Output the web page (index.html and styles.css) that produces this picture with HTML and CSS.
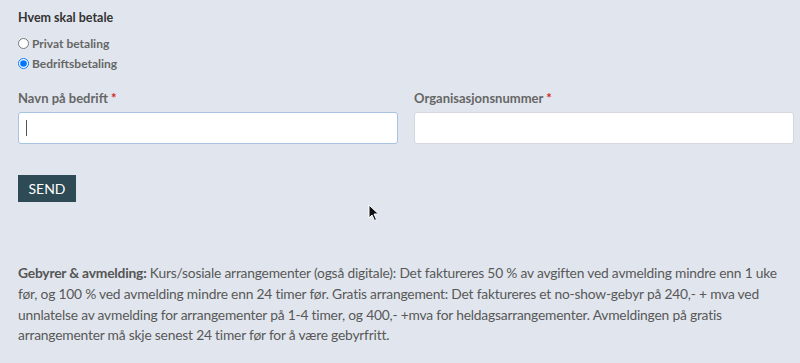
FILE: index.html
```html
<!doctype html>
<html>
<head>
<meta charset="UTF-8">
<title>Påmelding</title>
<link rel="stylesheet" href="styles.css">
</head>
<body>
    <div class="skjema">
        <div class="overskrift">Hvem skal betale</div>
        <label class="valg"><input type="radio" name="betaler"> Privat betaling</label>
        <label class="valg"><input type="radio" name="betaler" checked> Bedriftsbetaling</label>

        <div class="felter">
            <div class="felt">
                <div class="etikett">Navn på bedrift <span class="stjerne">*</span></div>
                <div class="boks aktiv"><span class="markor"></span></div>
            </div>
            <div class="felt">
                <div class="etikett">Organisasjonsnummer <span class="stjerne">*</span></div>
                <div class="boks"></div>
            </div>
        </div>

        <div class="knapperad">
            <button class="send">SEND</button>
            <svg class="peker" width="12" height="18" viewBox="0 0 12 18">
                <path d="M1 1 L1 14 L4 11 L6.5 16.5 L8.5 15.5 L6 10 L10.5 10 Z" fill="#111" stroke="#fff" stroke-width="1"/>
            </svg>
        </div>

        <p class="vilkar"><b>Gebyrer &amp; avmelding:</b> Kurs/sosiale arrangementer (også digitale): Det faktureres 50 % av avgiften ved avmelding mindre enn 1 uke før, og 100 % ved avmelding mindre enn 24 timer før. Gratis arrangement: Det faktureres et no-show-gebyr på 240,- + mva ved unnlatelse av avmelding for arrangementer på 1-4 timer, og 400,- +mva for heldagsarrangementer. Avmeldingen på gratis arrangementer må skje senest 24 timer før for å være gebyrfritt.</p>
    </div>
</body>
</html>
```

FILE: styles.css
```css
body {
    margin: 0;
    background-color: #e1e6ee;
    font-family: Lato, "Liberation Sans", sans-serif;
}

.skjema {
    padding: 9px 6px 0 18px;
}

.overskrift {
    font-size: 12.5px;
    font-weight: 700;
    color: #333;
    height: 17px;
    line-height: 17px;
    margin-bottom: 7px;
}

.valg {
    display: flex;
    align-items: center;
    height: 20px;
    font-size: 12px;
    font-weight: 700;
    color: #666;
}

.valg input {
    margin: 0 3px 0 0;
    width: 11px;
    height: 11px;
}

.felter {
    display: flex;
    gap: 16px;
    margin-top: 16px;
}

.felt {
    flex: 1;
}

.etikett {
    font-size: 13px;
    font-weight: 700;
    color: #666;
    height: 18px;
    line-height: 18px;
    margin-bottom: 5px;
}

.stjerne {
    color: #d0261c;
}

.boks {
    height: 30px;
    background-color: #fff;
    border: 1px solid #d4d8de;
    border-radius: 3px;
    display: flex;
    align-items: center;
}

.boks.aktiv {
    border-color: #a7c3e4;
}

.markor {
    width: 1px;
    height: 16px;
    background-color: #555;
    margin-left: 7px;
}

.knapperad {
    position: relative;
    margin-top: 31px;
    height: 27px;
}

.send {
    display: block;
    border: none;
    background-color: #2e4a55;
    color: #fff;
    font-family: Lato, sans-serif;
    font-size: 14px;
    height: 27px;
    width: 58px;
    padding: 0;
}

.peker {
    position: absolute;
    left: 350px;
    top: 29px;
}

.vilkar {
    margin: 61px 0 0 0;
    font-size: 13.8px;
    letter-spacing: -0.2px;
    line-height: 20.8px;
    color: #585858;
}

.vilkar b {
    color: #555;
}
```
